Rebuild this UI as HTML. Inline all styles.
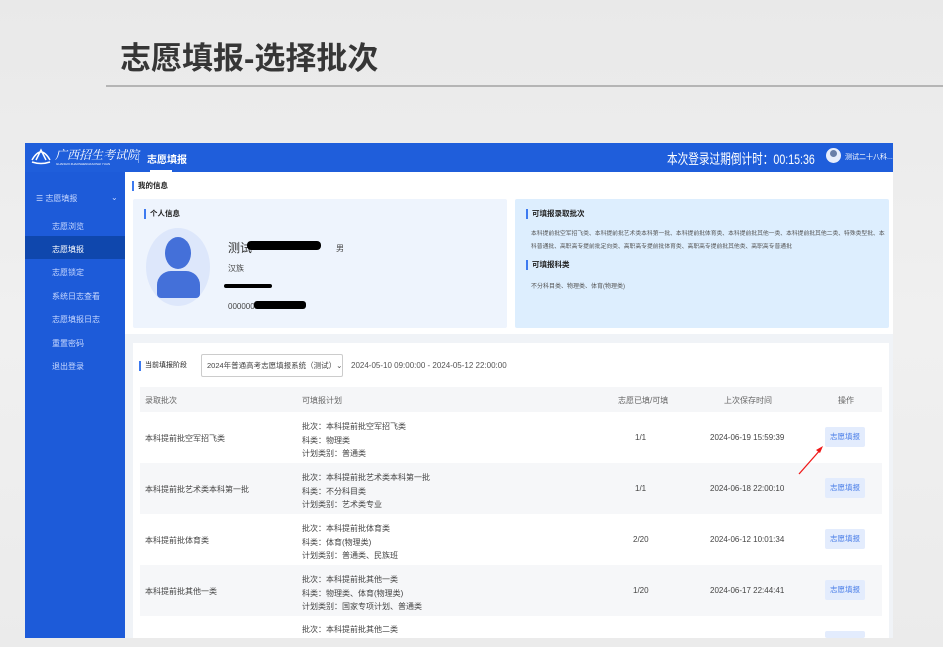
<!DOCTYPE html>
<html><head><meta charset="utf-8"><style>
*{margin:0;padding:0;box-sizing:border-box}
body{width:943px;height:647px;background:linear-gradient(180deg,#e9e9e9,#f0f0f0 50%,#ebebeb);position:relative;overflow:hidden;font-family:"Liberation Sans","Noto Sans CJK SC",sans-serif;}
.a{position:absolute}
.t{font-size:8px;color:#444;white-space:nowrap}
.s{font-size:8px;color:#c9d9ff;white-space:nowrap}
.hd{font-size:7.5px;color:#222;font-weight:bold;border-left:2px solid #3d7af0;padding-left:4px;line-height:10px}
.btn{position:absolute;left:825px;width:40px;height:20px;background:#e3ecfd;border-radius:2px;color:#4a7ee8;font-size:7.5px;text-align:center;line-height:20px}
</style></head><body>
<div class="a" style="left:120px;top:33px;font-size:31px;font-weight:bold;color:#363636;white-space:nowrap">志愿填报-选择批次</div>
<div class="a" style="left:106px;top:85px;width:837px;height:2px;background:#b5b5b5"></div>

<div class="a" style="left:25px;top:143px;width:868px;height:495px;background:#f0f3f7"></div>
<div class="a" style="left:25px;top:143px;width:868px;height:29px;background:#1f5edb"></div>
<svg class="a" style="left:30px;top:146px" width="22" height="20" viewBox="0 0 22 20"><path d="M2 14 Q11 -2 20 14 M6 14 L11 4 L16 14 M2 16 Q11 19 20 16" stroke="#fff" stroke-width="1.5" fill="none"/></svg>
<div class="a" style="left:55px;top:146px;font-size:12px;color:#fff;font-style:italic;font-family:'Noto Serif CJK SC',serif">广西招生考试院</div>
<div class="a" style="left:56px;top:162px;font-size:3px;color:#fff">GUANGXI ZHAOSHENGKAOSHI YUAN</div>
<div class="a" style="left:138px;top:151px;width:1px;height:12px;background:#7fa5ee"></div>
<div class="a" style="left:147px;top:151px;font-size:10px;font-weight:bold;color:#fff">志愿填报</div>
<div class="a" style="left:150px;top:170px;width:22px;height:2px;background:#fff"></div>
<div class="a" style="left:667px;top:149px;font-size:14px;color:#fff;white-space:nowrap;transform:scaleX(0.76);transform-origin:left">本次登录过期倒计时：00:15:36</div>
<div class="a" style="left:826px;top:148px;width:15px;height:15px;border-radius:50%;background:#e8eefc"></div>
<div class="a" style="left:830px;top:150px;width:7px;height:7px;border-radius:50%;background:#6a7fa8"></div>
<div class="a" style="left:845px;top:152px;font-size:7px;color:#fff;white-space:nowrap">测试二十八科...</div>

<div class="a" style="left:25px;top:172px;width:100px;height:466px;background:#1d5bd9"></div>
<div class="a" style="left:25px;top:236px;width:100px;height:23px;background:#0f47ad"></div>
<div class="a s" style="left:36px;top:193px">☰ 志愿填报</div>
<div class="a s" style="left:111px;top:193px">⌄</div>
<div class="a s" style="left:52px;top:221px">志愿浏览</div>
<div class="a" style="left:52px;top:244px;font-size:8px;color:#fff">志愿填报</div>
<div class="a s" style="left:52px;top:267px">志愿锁定</div>
<div class="a s" style="left:52px;top:291px">系统日志查看</div>
<div class="a s" style="left:52px;top:314px">志愿填报日志</div>
<div class="a s" style="left:52px;top:338px">重置密码</div>
<div class="a s" style="left:52px;top:361px">退出登录</div>

<div class="a" style="left:125px;top:172px;width:768px;height:162px;background:#fff"></div>
<div class="a hd" style="left:132px;top:181px">我的信息</div>
<div class="a" style="left:133px;top:199px;width:374px;height:129px;background:#eef4fd;border-radius:2px"></div>
<div class="a hd" style="left:144px;top:209px">个人信息</div>
<div class="a" style="left:146px;top:228px;width:64px;height:78px;border-radius:50%;background:#dde7fb"></div>
<div class="a" style="left:165px;top:237px;width:26px;height:32px;border-radius:50%;background:#4470d9"></div>
<div class="a" style="left:157px;top:271px;width:43px;height:27px;border-radius:14px 14px 4px 4px;background:#4470d9"></div>
<div class="a" style="left:228px;top:239px;font-size:12px;color:#333">测试</div>
<div class="a" style="left:247px;top:241px;width:74px;height:9px;background:#000;border-radius:4px"></div>
<div class="a t" style="left:336px;top:243px">男</div>
<div class="a t" style="left:228px;top:263px">汉族</div>
<div class="a" style="left:224px;top:284px;width:48px;height:4px;background:#000;border-radius:2px"></div>
<div class="a t" style="left:228px;top:302px">000000</div>
<div class="a" style="left:254px;top:301px;width:52px;height:8px;background:#000;border-radius:3px"></div>

<div class="a" style="left:515px;top:199px;width:374px;height:129px;background:#ddeefe;border-radius:2px"></div>
<div class="a hd" style="left:526px;top:209px">可填报录取批次</div>
<div class="a" style="left:531px;top:228px;width:356px;font-size:5.8px;color:#555;line-height:13px">本科提前批空军招飞类、本科提前批艺术类本科第一批、本科提前批体育类、本科提前批其他一类、本科提前批其他二类、特殊类型批、本科普通批、高职高专提前批定向类、高职高专提前批体育类、高职高专提前批其他类、高职高专普通批</div>
<div class="a hd" style="left:526px;top:260px">可填报科类</div>
<div class="a" style="left:531px;top:281px;font-size:6px;color:#555">不分科目类、物理类、体育(物理类)</div>

<div class="a" style="left:133px;top:343px;width:756px;height:295px;background:#fff"></div>
<div class="a hd" style="left:139px;top:361px;font-weight:normal;font-size:7px">当前填报阶段</div>
<div class="a" style="left:201px;top:354px;width:142px;height:23px;border:1px solid #ccc;border-radius:2px;font-size:7.5px;color:#444;line-height:21px;padding-left:5px;white-space:nowrap">2024年普通高考志愿填报系统（测试）⌄</div>
<div class="a" style="left:351px;top:361px;font-size:8px;color:#555">2024-05-10 09:00:00 - 2024-05-12 22:00:00</div>

<div class="a" style="left:140px;top:387px;width:742px;height:25px;background:#f5f6f8"></div>
<div class="a t" style="left:145px;top:395px;color:#666">录取批次</div>
<div class="a t" style="left:302px;top:395px;color:#666">可填报计划</div>
<div class="a t" style="left:618px;top:395px;color:#666">志愿已填/可填</div>
<div class="a t" style="left:724px;top:395px;color:#666">上次保存时间</div>
<div class="a t" style="left:838px;top:395px;color:#666">操作</div>

<div class="a" style="left:140px;top:463px;width:742px;height:51px;background:#f6f7f9"></div>
<div class="a" style="left:140px;top:565px;width:742px;height:51px;background:#f6f7f9"></div>

<div class="a t" style="left:145px;top:433px">本科提前批空军招飞类</div>
<div class="a t" style="left:302px;top:420px;line-height:13.5px">批次：本科提前批空军招飞类<br>科类：物理类<br>计划类别：普通类</div>
<div class="a t" style="left:635px;top:433px">1/1</div>
<div class="a t" style="left:710px;top:433px">2024-06-19 15:59:39</div>
<div class="btn" style="top:427px">志愿填报</div>

<div class="a t" style="left:145px;top:484px">本科提前批艺术类本科第一批</div>
<div class="a t" style="left:302px;top:471px;line-height:13.5px">批次：本科提前批艺术类本科第一批<br>科类：不分科目类<br>计划类别：艺术类专业</div>
<div class="a t" style="left:635px;top:484px">1/1</div>
<div class="a t" style="left:710px;top:484px">2024-06-18 22:00:10</div>
<div class="btn" style="top:478px">志愿填报</div>

<div class="a t" style="left:145px;top:535px">本科提前批体育类</div>
<div class="a t" style="left:302px;top:522px;line-height:13.5px">批次：本科提前批体育类<br>科类：体育(物理类)<br>计划类别：普通类、民族班</div>
<div class="a t" style="left:633px;top:535px">2/20</div>
<div class="a t" style="left:710px;top:535px">2024-06-12 10:01:34</div>
<div class="btn" style="top:529px">志愿填报</div>

<div class="a t" style="left:145px;top:586px">本科提前批其他一类</div>
<div class="a t" style="left:302px;top:573px;line-height:13.5px">批次：本科提前批其他一类<br>科类：物理类、体育(物理类)<br>计划类别：国家专项计划、普通类</div>
<div class="a t" style="left:633px;top:586px">1/20</div>
<div class="a t" style="left:710px;top:586px">2024-06-17 22:44:41</div>
<div class="btn" style="top:580px">志愿填报</div>

<div class="a t" style="left:302px;top:624px">批次：本科提前批其他二类</div>
<div class="btn" style="top:631px;height:7px"></div>

<svg class="a" style="left:795px;top:442px" width="32" height="36"><line x1="4" y1="32" x2="26" y2="7" stroke="#f01818" stroke-width="1.3"/><path d="M28 4 L21 8 L25 11 Z" fill="#f01818"/></svg>
</body></html>
